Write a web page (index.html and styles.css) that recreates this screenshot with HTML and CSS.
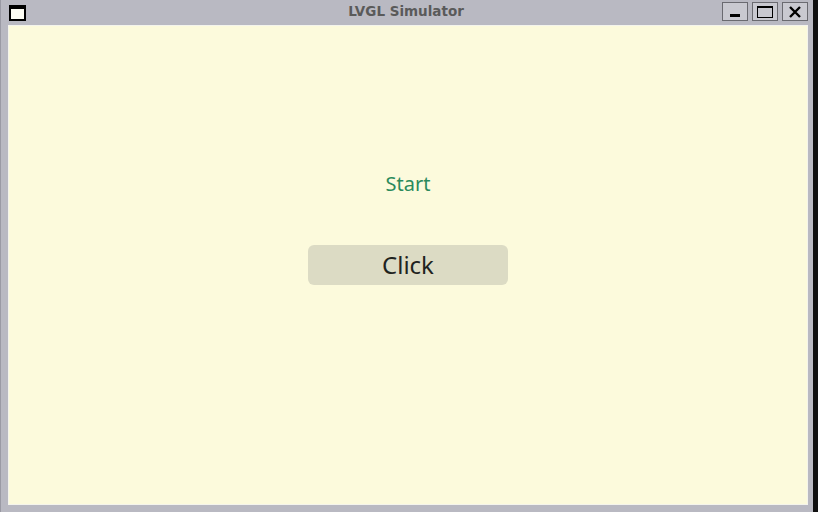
FILE: index.html
```html
<!DOCTYPE html>
<html>
<head>
<meta charset="utf-8">
<link rel="stylesheet" href="styles.css">
</head>
<body>
<div class="window">
  <div class="titlebar">
    <div class="appicon"></div>
    <div class="title">LVGL Simulator</div>
    <div class="controls">
      <div class="ctl"><span class="min"></span></div>
      <div class="ctl"><span class="max"></span></div>
      <div class="ctl">
        <svg width="14" height="12" viewBox="0 0 14 12"><path d="M2 1 L12 11 M12 1 L2 11" stroke="#000" stroke-width="2.4"/></svg>
      </div>
    </div>
  </div>
  <div class="screen">
    <div class="label">Start</div>
    <div class="btn">Click</div>
  </div>
</div>
</body>
</html>
```

FILE: styles.css
```css
html, body {
  margin: 0;
  padding: 0;
  background: #101010;
  overflow: hidden;
}
.window {
  width: 818px;
  height: 512px;
  background: #b9b9c2;
  display: flex;
  flex-direction: column;
  box-sizing: border-box;
  padding: 0 5px 7px 7px;
  border-left: 1px solid #9a9aa4;
  border-right: 5px solid #101010;
}
.titlebar {
  height: 25px;
  display: flex;
  align-items: center;
  margin-left: -7px;
}
.appicon {
  width: 13px;
  height: 10px;
  margin-left: 8px;
  background: #fdfdf4;
  border: 2px solid #000;
  border-top-width: 4px;
}
.title {
  flex: 1;
  text-align: center;
  font-family: "DejaVu Sans", sans-serif;
  font-weight: bold;
  font-size: 13.5px;
  color: #5a5a5a;
  padding-left: 64px;
  margin-top: -3px;
}
.controls {
  display: flex;
  gap: 4px;
  margin-top: -2px;
}
.ctl {
  width: 24px;
  height: 17px;
  border: 1px solid #6a6a70;
  background: #c9c9d0;
  display: flex;
  align-items: center;
  justify-content: center;
}
.min {
  width: 10px;
  height: 3px;
  background: #000;
  margin-top: 8px;
}
.max {
  width: 14px;
  height: 9px;
  border: 1px solid #000;
  border-top-width: 2px;
}
.screen {
  flex: 1;
  background: #fcfadc;
  display: flex;
  flex-direction: column;
  align-items: center;
  border: 1px solid #f4f4ec;
}
.label {
  margin-top: 145px;
  font-family: "Noto Sans", sans-serif;
  font-size: 20px;
  color: #2b8a5c;
  line-height: 26px;
}
.btn {
  margin-top: 48px;
  width: 200px;
  height: 40px;
  border-radius: 6px;
  background: #dcdbc4;
  font-family: "Noto Sans", sans-serif;
  font-size: 24px;
  color: #1f2320;
  display: flex;
  align-items: center;
  justify-content: center;
  line-height: 1;
}
```
